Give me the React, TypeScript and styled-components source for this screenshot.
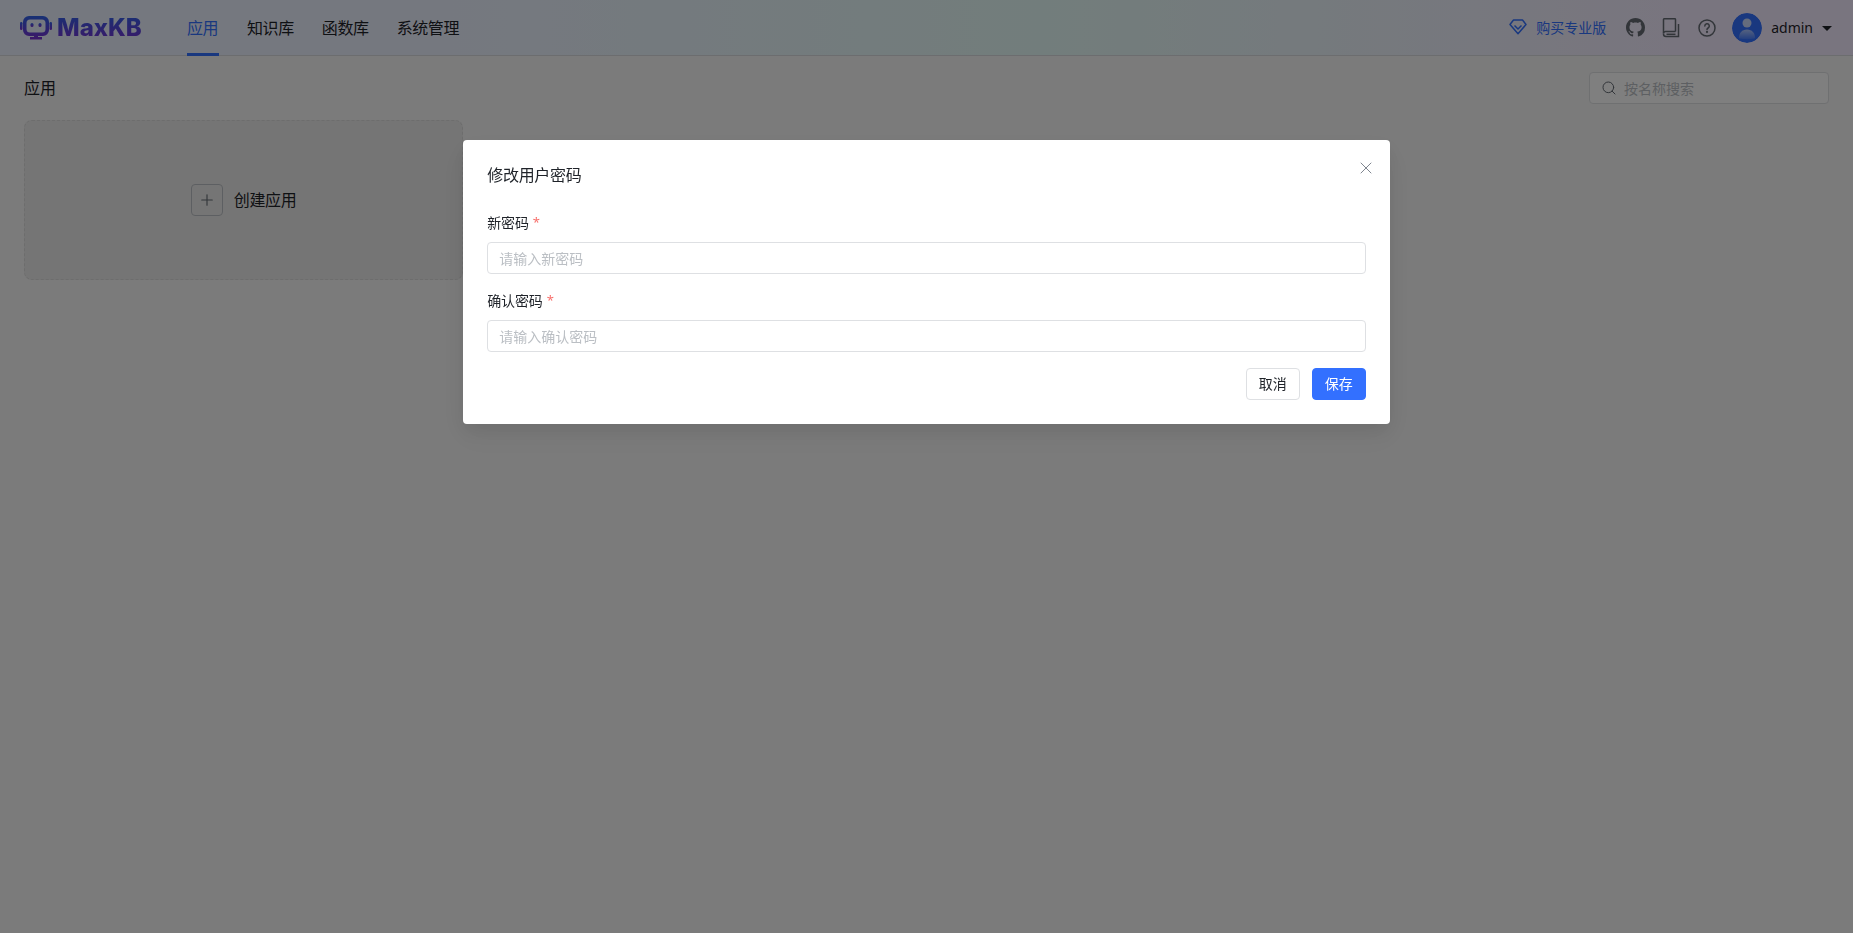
import React from "react";
import styled, { createGlobalStyle } from "styled-components";
import { X, Search, Plus } from "lucide-react";

const Global = createGlobalStyle`
  html, body { margin: 0; padding: 0; height: 100%; }
  body {
    background: #f6f6f6;
    color: #1f2329;
    font-family: "Noto Sans CJK SC", "Noto Sans", sans-serif;
    font-size: 14px;
  }
  * { box-sizing: border-box; }
  input::placeholder { color: #bbbfc4; opacity: 1; }
`;

const Page = styled.div`
  width: 100%;
  height: 933px;
  overflow: hidden;
`;

const Header = styled.header`
  height: 56px;
  display: flex;
  align-items: stretch;
  justify-content: space-between;
  padding: 0 21px 0 20px;
  background: linear-gradient(90deg, #ebf1ff 24.34%, #e5fbf8 56.18%, #f2ebfe 90.18%);
  border-bottom: 1px solid #d8dade;
`;

const Left = styled.div`
  display: flex;
  align-items: stretch;
`;

const Logo = styled.div`
  display: flex;
  align-items: center;
  gap: 5px;
  width: 167px;
`;

const LogoText = styled.span`
  font-family: "Inter", sans-serif;
  font-weight: 800;
  font-size: 24px;
  line-height: 28px;
  background: linear-gradient(180deg, #2f62e8 0%, #7a2fd0 100%);
  -webkit-background-clip: text;
  background-clip: text;
  color: transparent;
`;

const Nav = styled.nav`
  display: flex;
  gap: 28px;
`;

const NavItem = styled.a<{ $active?: boolean }>`
  display: flex;
  align-items: center;
  min-width: 32px;
  font-size: 16px;
  letter-spacing: -0.4px;
  color: ${(p) => (p.$active ? "#3370ff" : "#1f2329")};
  border-bottom: 3px solid ${(p) => (p.$active ? "#3370ff" : "transparent")};
  margin-bottom: -1px;
`;

const Right = styled.div`
  display: flex;
  align-items: center;
`;

const Buy = styled.a`
  display: flex;
  align-items: center;
  gap: 9px;
  color: #3370ff;
  margin-right: 19px;
  padding-bottom: 1px;
`;

const IconSlot = styled.span`
  display: flex;
  width: 20px;
  height: 20px;
  align-items: center;
  justify-content: center;
  margin-right: 16px;
  color: #646a73;
`;

const Avatar = styled.span`
  width: 30px;
  height: 30px;
  border-radius: 50%;
  overflow: hidden;
  display: block;
  margin: 0 9px 0 -1px;
`;

const UserName = styled.span`
  font-family: "Noto Sans", sans-serif;
  color: #1f2329;
`;

const Caret = styled.span`
  width: 0;
  height: 0;
  margin-left: 9px;
  margin-top: 1px;
  border-left: 5px solid transparent;
  border-right: 5px solid transparent;
  border-top: 5px solid #1f2329;
`;

const Main = styled.main`
  padding: 16px 24px;
`;

const TitleBar = styled.div`
  display: flex;
  align-items: center;
  justify-content: space-between;
  height: 32px;
  margin-bottom: 16px;
`;

const PageTitle = styled.h1`
  margin: 0;
  padding-bottom: 2px;
  font-size: 16px;
  font-weight: 400;
`;

const SearchBox = styled.label`
  width: 240px;
  height: 32px;
  display: flex;
  align-items: center;
  gap: 7px;
  padding: 0 11px;
  background: #fff;
  border: 1px solid #dee0e3;
  border-radius: 4px;
  color: #646a73;
`;

const SearchInput = styled.input`
  flex: 1;
  min-width: 0;
  border: 0;
  outline: 0;
  padding: 0;
  background: transparent;
  font: inherit;
`;

const CardGrid = styled.div`
  display: grid;
  grid-template-columns: repeat(4, 1fr);
  gap: 16px;
`;

const CreateCard = styled.div`
  height: 160px;
  display: flex;
  align-items: center;
  justify-content: center;
  gap: 11px;
  background: #ebebeb;
  border: 1px dashed #dadada;
  border-radius: 8px;
`;

const CardLabel = styled.span`
  font-size: 16px;
  letter-spacing: -0.3px;
  padding-bottom: 2px;
`;

const PlusBox = styled.span`
  width: 32px;
  height: 32px;
  display: flex;
  align-items: center;
  justify-content: center;
  border: 1px solid #bbbfc4;
  border-radius: 4px;
  color: #646a73;
`;

const Overlay = styled.div`
  position: fixed;
  inset: 0;
  background: rgba(0, 0, 0, 0.5);
  display: flex;
  justify-content: center;
  align-items: flex-start;
  padding-top: 140px;
`;

const Dialog = styled.div`
  position: relative;
  width: 50%;
  height: 284px;
  background: #fff;
  border-radius: 4px;
  padding: 24px;
  box-shadow: 0 12px 32px 4px rgba(0, 0, 0, 0.04), 0 8px 20px rgba(0, 0, 0, 0.08);
`;

const DialogTitle = styled.h2`
  margin: -1px 0 27px;
  font-size: 16px;
  line-height: 22px;
  font-weight: 400;
  letter-spacing: -0.3px;
`;

const CloseButton = styled.button`
  position: absolute;
  top: 18px;
  right: 14px;
  width: 20px;
  height: 20px;
  padding: 0;
  border: 0;
  background: none;
  color: #7f858f;
  display: flex;
`;

const Field = styled.div`
  margin-bottom: 16px;
`;

const Label = styled.label`
  display: flex;
  height: 22px;
  line-height: 20px;
  margin-bottom: 8px;
  letter-spacing: -0.15px;
  &::after {
    content: "*";
    font-family: "Noto Sans", sans-serif;
    color: #f54a45;
    font-size: 13px;
    margin-left: 4px;
    line-height: 20px;
    opacity: 0.8;
  }
`;

const TextInput = styled.input`
  display: block;
  width: 100%;
  height: 32px;
  padding: 0 11px;
  border: 1px solid #dee0e3;
  border-radius: 4px;
  outline: 0;
  font: inherit;
`;

const Footer = styled.div`
  display: flex;
  justify-content: flex-end;
  gap: 12px;
`;

const Button = styled.button<{ $primary?: boolean }>`
  width: 54px;
  height: 32px;
  padding: 0 0 2px;
  font: inherit;
  border-radius: 4px;
  border: 1px solid ${(p) => (p.$primary ? "#3370ff" : "#dee0e3")};
  background: ${(p) => (p.$primary ? "#3370ff" : "#fff")};
  color: ${(p) => (p.$primary ? "#fff" : "#1f2329")};
`;

const RobotLogo = () => (
  <svg width="32" height="24" viewBox="0 0 32 24">
    <defs>
      <linearGradient id="robot" x1="0" y1="0" x2="0" y2="1">
        <stop offset="0" stopColor="#2f62e8" />
        <stop offset="1" stopColor="#7a2fd0" />
      </linearGradient>
    </defs>
    <path
      fill="url(#robot)"
      fillRule="evenodd"
      d="M9 0h14a6 6 0 0 1 6 6v8a6 6 0 0 1-6 6h-5v1h4v2.500H10V21h4v-1H9a6 6 0 0 1-6-6V6a6 6 0 0 1 6-6zm1 3.500A3.500 3.500 0 0 0 6.500 7v6a3.500 3.500 0 0 0 3.500 3.500h12a3.500 3.500 0 0 0 3.500-3.500V7A3.500 3.500 0 0 0 22 3.500H10z"
    />
    <rect x="0" y="6" width="2.500" height="8" rx="1.200" fill="url(#robot)" />
    <rect x="29.500" y="6" width="2.500" height="8" rx="1.200" fill="url(#robot)" />
    <rect x="10.500" y="7" width="3" height="4" rx="1.500" fill="url(#robot)" />
    <rect x="18.500" y="7" width="3" height="4" rx="1.500" fill="url(#robot)" />
  </svg>
);

const DiamondIcon = () => (
  <svg width="18" height="16" viewBox="0 0 18 16" fill="none" stroke="#3370ff" strokeWidth="1.500" strokeLinejoin="round">
    <path d="M4.500 1h9L17 5.500 9 14.800 1 5.500z" />
    <path d="M5.500 6.500 9 10l3.500-3.500" />
  </svg>
);

const GithubIcon = () => (
  <svg width="19" height="19" viewBox="0 0 16 16" fill="#646a73">
    <path d="M8 0C3.580 0 0 3.580 0 8c0 3.540 2.290 6.530 5.470 7.590.4.070.55-.17.55-.38 0-.19-.01-.82-.01-1.490-2.010.37-2.530-.49-2.690-.94-.09-.23-.48-.94-.82-1.130-.28-.15-.68-.52-.01-.53.630-.01 1.080.58 1.230.82.720 1.210 1.870.87 2.330.66.070-.52.280-.87.510-1.070-1.780-.2-3.640-.89-3.640-3.950 0-.87.310-1.590.820-2.150-.08-.2-.36-1.020.08-2.120 0 0 .67-.21 2.200.82.640-.18 1.320-.27 2-.27s1.360.09 2 .27c1.530-1.040 2.200-.82 2.200-.82.440 1.100.16 1.920.08 2.120.51.560.82 1.270.82 2.150 0 3.070-1.870 3.750-3.650 3.950.29.250.54.730.54 1.480 0 1.070-.01 1.930-.01 2.200 0 .21.15.46.55.38A8.010 8.010 0 0 0 16 8c0-4.420-3.580-8-8-8z" />
  </svg>
);

const BookIcon = () => (
  <svg width="18" height="20" viewBox="0 0 18 20" fill="none" stroke="#646a73" strokeWidth="1.500">
    <path d="M13.500 13.500V1.500a.8.8 0 0 0-.8-.8H2.300a.8.8 0 0 0-.8.8v14" />
    <path d="M1.500 15.500a2 2 0 0 1 2-2h10" />
    <path d="M16.500 6v12.500H4a2.500 2.500 0 0 1-2.500-2.500" />
    <path d="M4.500 16.300h9" />
  </svg>
);

const HelpIcon = () => (
  <svg width="18" height="18" viewBox="0 0 18 18" fill="none" stroke="#646a73" strokeWidth="1.500" strokeLinecap="round">
    <circle cx="9" cy="9" r="8" />
    <path d="M6.800 7a2.250 2.250 0 1 1 3.300 2c-.7.400-1.100.8-1.100 1.600" />
    <circle cx="9" cy="13" r="0.400" />
  </svg>
);

const AvatarIcon = () => (
  <svg width="30" height="30" viewBox="0 0 30 30">
    <defs>
      <linearGradient id="person" x1="0" y1="0" x2="0" y2="1">
        <stop offset="0" stopColor="#ffffff" stopOpacity="0.6" />
        <stop offset="1" stopColor="#ffffff" stopOpacity="0.1" />
      </linearGradient>
    </defs>
    <circle cx="15" cy="15" r="15" fill="#3370ff" />
    <circle cx="15" cy="10" r="4.500" fill="#c9d8fb" />
    <path d="M7 25c0-5 3-8.500 8-8.500s8 3.500 8 8.500c0 1.500-16 1.500-16 0z" fill="url(#person)" />
  </svg>
);

export default function App() {
  return (
    <Page>
      <Global />
      <Header>
        <Left>
          <Logo>
            <RobotLogo />
            <LogoText>MaxKB</LogoText>
          </Logo>
          <Nav>
            <NavItem $active>应用</NavItem>
            <NavItem>知识库</NavItem>
            <NavItem>函数库</NavItem>
            <NavItem>系统管理</NavItem>
          </Nav>
        </Left>
        <Right>
          <Buy>
            <DiamondIcon />
            购买专业版
          </Buy>
          <IconSlot><GithubIcon /></IconSlot>
          <IconSlot><BookIcon /></IconSlot>
          <IconSlot><HelpIcon /></IconSlot>
          <Avatar><AvatarIcon /></Avatar>
          <UserName>admin</UserName>
          <Caret />
        </Right>
      </Header>
      <Main>
        <TitleBar>
          <PageTitle>应用</PageTitle>
          <SearchBox>
            <Search size={16} strokeWidth={1.5} />
            <SearchInput placeholder="按名称搜索" />
          </SearchBox>
        </TitleBar>
        <CardGrid>
          <CreateCard>
            <PlusBox><Plus size={18} strokeWidth={1.5} /></PlusBox>
            <CardLabel>创建应用</CardLabel>
          </CreateCard>
        </CardGrid>
      </Main>
      <Overlay>
        <Dialog>
          <DialogTitle>修改用户密码</DialogTitle>
          <CloseButton aria-label="关闭"><X size={20} strokeWidth={1.2} /></CloseButton>
          <Field>
            <Label>新密码</Label>
            <TextInput placeholder="请输入新密码" />
          </Field>
          <Field>
            <Label>确认密码</Label>
            <TextInput placeholder="请输入确认密码" />
          </Field>
          <Footer>
            <Button>取消</Button>
            <Button $primary>保存</Button>
          </Footer>
        </Dialog>
      </Overlay>
    </Page>
  );
}
